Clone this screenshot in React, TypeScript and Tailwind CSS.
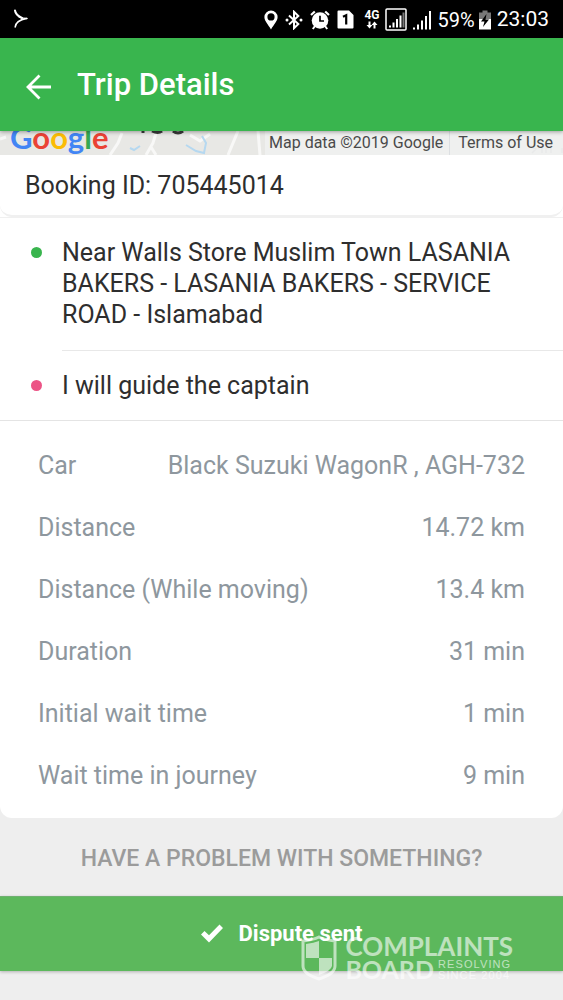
import type { ReactNode } from "react";

const tripDetails = [
  { label: "Car", value: "Black Suzuki WagonR , AGH-732" },
  { label: "Distance", value: "14.72 km" },
  { label: "Distance (While moving)", value: "13.4 km" },
  { label: "Duration", value: "31 min" },
  { label: "Initial wait time", value: "1 min" },
  { label: "Wait time in journey", value: "9 min" },
];

function CareemIcon() {
  return (
    <svg
      width="14"
      height="20"
      viewBox="0 0 14 20"
      fill="none"
      stroke="#fff"
      strokeLinecap="round"
    >
      <path strokeWidth="2" d="M1 1.500C1.500 5 4.500 7.500 8 9" />
      <path strokeWidth="1.600" d="M1.200 18C1.500 14.500 4.500 11 12.500 9.500" />
      <path strokeWidth="1.400" d="M5 7.500C7 9 9.500 9.500 13 9.500" />
    </svg>
  );
}

function PinIcon() {
  return (
    <svg width="14" height="20" viewBox="0 0 14 20" fill="#fff">
      <path
        fillRule="evenodd"
        d="M7 0.500a6.600 6.600 0 0 1 6.600 6.600C13.600 11 10 14.500 7 19.500C4 14.500 0.400 11 0.400 7.100A6.600 6.600 0 0 1 7 0.500ZM7 3.300a3.600 3.600 0 1 0 0 7.200a3.600 3.600 0 0 0 0-7.200Z"
      />
    </svg>
  );
}

function BluetoothIcon() {
  return (
    <svg width="18" height="20" viewBox="0 0 18 20" fill="none" stroke="#fff">
      <path
        strokeWidth="2"
        d="M4 5.500L13.300 14L9 18.200V1.800L13.300 6L4 14.500"
      />
      <circle cx="2" cy="10" r="1.500" fill="#fff" stroke="none" />
      <circle cx="16" cy="10" r="1.500" fill="#fff" stroke="none" />
    </svg>
  );
}

function AlarmIcon() {
  return (
    <svg width="20" height="20" viewBox="0 0 20 20" fill="none" stroke="#fff">
      <circle cx="10" cy="10.500" r="8.300" fill="#fff" stroke="none" />
      <path strokeWidth="2.200" d="M1 5L4.800 1.500M19 5L15.200 1.500" />
      <path strokeWidth="2" d="M5 16L2.800 19M15 16L17.200 19" />
      <path stroke="#000" strokeWidth="1.700" d="M10 5.800V11H14" />
    </svg>
  );
}

function SimIcon() {
  return (
    <svg width="17" height="19" viewBox="0 0 17 19">
      <path
        fill="#fff"
        d="M1.500 0.500H12L16.500 5V17.500a1 1 0 0 1-1 1H1.500a1 1 0 0 1-1-1V1.500a1 1 0 0 1 1-1Z"
      />
      <path
        fill="none"
        stroke="#000"
        strokeWidth="2.200"
        d="M6 6.800L9.200 5.200V14.500"
      />
    </svg>
  );
}

function NetworkIcon() {
  return (
    <span className="flex flex-col items-center">
      <span className="text-[12px] leading-[11px] font-bold">4G</span>
      <svg width="12" height="8" viewBox="0 0 12 8" fill="#fff">
        <path d="M2.500 0.500h2V4H6.500L3.500 7.500L0.500 4H2.500ZM7.500 7.500h2V4h2L8.500 0.500L5.500 4h2Z" />
      </svg>
    </span>
  );
}

function BoxedSignalIcon() {
  return (
    <svg width="22" height="23" viewBox="0 0 22 23">
      <rect
        x="1"
        y="1"
        width="20"
        height="21"
        rx="1"
        fill="none"
        stroke="#fff"
        strokeWidth="1.500"
      />
      <path
        stroke="#fff"
        strokeWidth="2"
        d="M5 19.500V17.500M8.500 19.500V14.500M12 19.500V11M15.500 19.500V7.500"
      />
      <path stroke="#777" strokeWidth="2" d="M18.500 19.500V4.500" />
    </svg>
  );
}

function SignalIcon() {
  return (
    <svg width="20" height="20" viewBox="0 0 20 20" stroke="#fff">
      <path
        strokeWidth="2"
        d="M2 19.500V17.500M6 19.500V14.500M10 19.500V10.500M14 19.500V6M18 19.500V1"
      />
    </svg>
  );
}

function BatteryIcon() {
  return (
    <svg width="12" height="20" viewBox="0 0 12 20">
      <path fill="#777" d="M3.500 0.500h5V2.500H12V9H0V2.500H3.500Z" />
      <path fill="#fff" d="M0 9H12V19.500H0Z" />
      <path fill="#000" d="M7.500 4L2 11.500H5.500L4 17L10 9.500H6.500Z" />
    </svg>
  );
}

function StatusBar() {
  return (
    <div className="flex h-[38px] items-center justify-between bg-black px-3.5 text-white">
      <CareemIcon />
      <div className="flex items-center gap-1.5 pt-px">
        <div className="flex items-center gap-[7px] pr-1">
          <PinIcon />
          <BluetoothIcon />
          <AlarmIcon />
          <SimIcon />
        </div>
        <div className="flex items-center gap-[5px]">
          <NetworkIcon />
          <BoxedSignalIcon />
          <SignalIcon />
        </div>
        <div className="flex items-center gap-1">
          <span className="text-[20px]">59%</span>
          <BatteryIcon />
        </div>
        <span className="text-[21px]">23:03</span>
      </div>
    </div>
  );
}

function Header() {
  return (
    <header className="relative z-10 flex h-[93px] items-center gap-6 bg-[#39b54e] pl-[25px] text-white shadow-[0_1px_4px_rgba(0,0,0,0.35)]">
      <button type="button" aria-label="Back" className="pt-1">
        <svg
          width="28"
          height="26"
          viewBox="0 0 28 26"
          fill="none"
          stroke="#fff"
          strokeWidth="2.800"
        >
          <path d="M26 13H3M14.500 1.500L3 13L14.500 24.500" />
        </svg>
      </button>
      <h1 className="text-[31px] leading-9 font-medium">Trip Details</h1>
    </header>
  );
}

function MapStrip() {
  return (
    <div className="relative flex h-6 items-center justify-between overflow-hidden bg-[#e8e8e5]">
      <svg
        className="absolute inset-0 h-full w-full"
        viewBox="0 0 563 24"
        preserveAspectRatio="none"
        fill="none"
      >
        <path
          stroke="#f8f8f7"
          strokeWidth="3"
          d="M0 8L6 6M122 2L118 12L110 24M156 2L153 12L146 24M151 16L156 24M190 4L200 10L210 3M238 0L228 24M258 0L260 24"
        />
        <path
          stroke="#b5d8f0"
          strokeWidth="2"
          d="M130 17L134 19L140 15M186 14L196 20L204 22L206 12L202 5"
        />
        <path
          stroke="#3a3a3a"
          strokeWidth="3"
          d="M143 0V2M152 0Q158 3 162 0M173 0Q178 4 183 0"
        />
        <path
          stroke="#c9c9c9"
          strokeWidth="1.500"
          d="M530 15L536 18L532 22M542 16V22M546 22V17Q550 15 551 18V22M562 17V22"
        />
      </svg>
      <div
        aria-label="Google"
        className="relative -mt-3 pl-2.5 font-[Lato,sans-serif] text-[31px] leading-8 font-bold"
      >
        <span className="text-[#4285f4]">G</span>
        <span className="text-[#ea4335]">o</span>
        <span className="text-[#fbbc05]">o</span>
        <span className="text-[#4285f4]">g</span>
        <span className="text-[#34a853]">l</span>
        <span className="text-[#ea4335]">e</span>
      </div>
      <div className="relative flex h-full items-center bg-[#f0f1f1]/80 pr-2.5 pl-1 text-base text-[#4a4a4a]">
        <span className="border-r border-[#dcdfe2] pr-1.5">
          Map data ©2019 Google
        </span>
        <a href="#terms" className="pl-2">
          Terms of Use
        </a>
      </div>
    </div>
  );
}

function Stop({ color, children }: { color: string; children: ReactNode }) {
  return (
    <li className="flex pl-[31px]">
      <span className={`mt-[29px] size-[11px] shrink-0 rounded-full ${color}`} />
      {children}
    </li>
  );
}

function ShieldIcon() {
  return (
    <svg width="36" height="46" viewBox="0 0 36 46" fill="none">
      <path
        stroke="#fff"
        strokeWidth="3"
        d="M2 6Q12 5 18 2Q24 5 34 6V31Q34 39 18 44Q2 39 2 31Z"
      />
      <path fill="#fff" d="M5 9Q13 8 18 6V23H5ZM18 23H31V31Q30 36 18 40Z" />
    </svg>
  );
}

function Watermark() {
  return (
    <div className="pointer-events-none absolute top-[39px] right-[50px] flex items-center gap-2 font-[Lato,sans-serif] text-white opacity-60">
      <ShieldIcon />
      <div className="font-bold">
        <div className="text-[26px] leading-[23px]">COMPLAINTS</div>
        <div className="flex items-center gap-1">
          <span className="text-[25px] leading-[23px]">BOARD</span>
          <span className="font-[Liberation_Sans,sans-serif] text-[11px] leading-[11px] font-normal tracking-widest">
            <span className="block">RESOLVING</span>
            <span className="block">SINCE 2004</span>
          </span>
        </div>
      </div>
    </div>
  );
}

function App() {
  return (
    <div className="min-h-screen overflow-hidden bg-[#eeeeee] font-[Roboto,sans-serif] text-[#2e2e2e]">
      <StatusBar />
      <Header />
      <main>
        <MapStrip />

        <div className="rounded-b-xl bg-white">
          <section className="rounded-b-xl border-b-2 border-[#f0f0f0] px-[25px] pt-[15px] pb-[13px] text-[25px] leading-8">
            Booking ID: 705445014
          </section>

          <ul className="border-t border-b border-t-[#f0f0f0] border-b-[#e4e4e4] text-[25px] leading-[31px]">
            <Stop color="bg-[#39b54e]">
              <p className="ml-5 flex-1 border-b border-[#e8e8e8] pt-[19px] pr-10 pb-5">
                Near Walls Store Muslim Town LASANIA BAKERS - LASANIA BAKERS -
                SERVICE ROAD - Islamabad
              </p>
            </Stop>
            <Stop color="bg-[#ec5486]">
              <p className="ml-5 flex-1 py-[19px]">I will guide the captain</p>
            </Stop>
          </ul>

          <dl className="px-[38px] pt-3.5 pb-[11px] text-[25px] leading-[30px] text-[#8e979e]">
            {tripDetails.map(({ label, value }) => (
              <div key={label} className="flex justify-between py-4">
                <dt>{label}</dt>
                <dd>{value}</dd>
              </div>
            ))}
          </dl>
        </div>

        <h2 className="pt-[26px] pb-[22px] text-center text-[23px] leading-[30px] font-medium text-[#9b9b9b]">
          HAVE A PROBLEM WITH SOMETHING?
        </h2>

        <div className="relative">
          <button
            type="button"
            className="flex h-[75px] w-full items-center justify-center gap-4 border-t border-[#6fb070] bg-[#5cb85c] pb-0.5 text-[22px] font-bold text-white shadow-[0_1px_3px_rgba(0,0,0,0.25)]"
          >
            <svg width="22" height="19" viewBox="0 0 22 19" fill="#fff">
              <path d="M0 10.500L3.500 7L8 11.300L18.500 0.500L22 4L8 18.500Z" />
            </svg>
            Dispute sent
          </button>
          <Watermark />
        </div>
      </main>
    </div>
  );
}

export default App;
